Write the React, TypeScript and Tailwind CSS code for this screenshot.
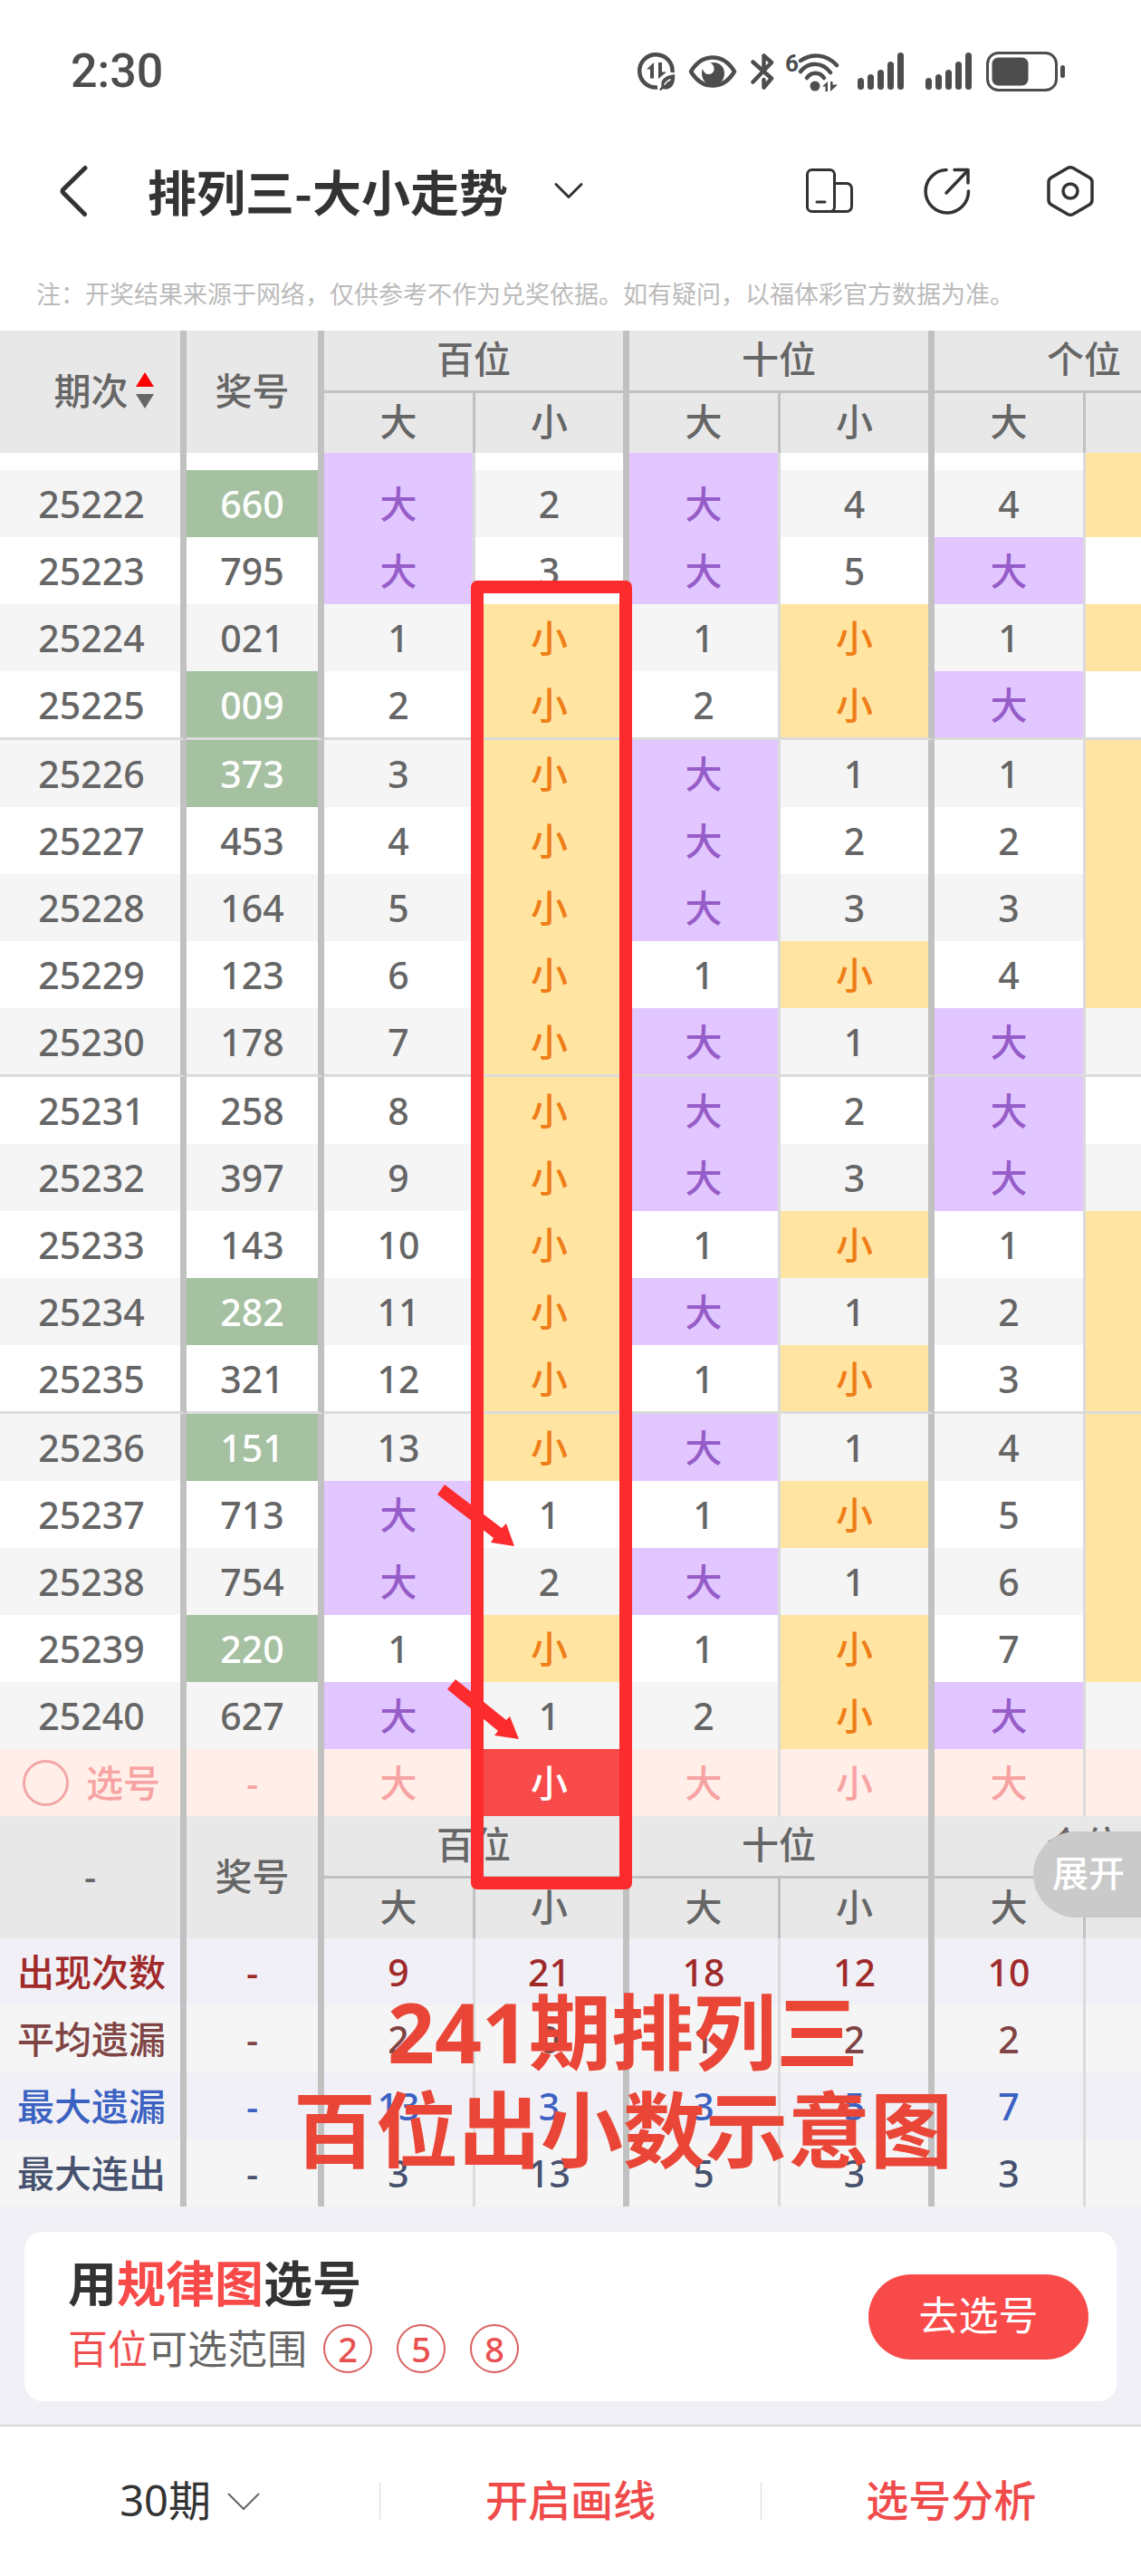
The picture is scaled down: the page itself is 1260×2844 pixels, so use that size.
import React from 'react';
import clsx from 'clsx';

type Row = {
  issue: string;
  num: string;
  group?: boolean; // 组三号码，绿色底
  cells: [string, string, string, string, string];
};

// 每 5 期画一条分隔线
const rows: Row[] = [
  { issue: '25222', num: '660', group: true, cells: ['大', '2', '大', '4', '4'] },
  { issue: '25223', num: '795', cells: ['大', '3', '大', '5', '大'] },
  { issue: '25224', num: '021', cells: ['1', '小', '1', '小', '1'] },
  { issue: '25225', num: '009', group: true, cells: ['2', '小', '2', '小', '大'] },
  { issue: '25226', num: '373', group: true, cells: ['3', '小', '大', '1', '1'] },
  { issue: '25227', num: '453', cells: ['4', '小', '大', '2', '2'] },
  { issue: '25228', num: '164', cells: ['5', '小', '大', '3', '3'] },
  { issue: '25229', num: '123', cells: ['6', '小', '1', '小', '4'] },
  { issue: '25230', num: '178', cells: ['7', '小', '大', '1', '大'] },
  { issue: '25231', num: '258', cells: ['8', '小', '大', '2', '大'] },
  { issue: '25232', num: '397', cells: ['9', '小', '大', '3', '大'] },
  { issue: '25233', num: '143', cells: ['10', '小', '1', '小', '1'] },
  { issue: '25234', num: '282', group: true, cells: ['11', '小', '大', '1', '2'] },
  { issue: '25235', num: '321', cells: ['12', '小', '1', '小', '3'] },
  { issue: '25236', num: '151', group: true, cells: ['13', '小', '大', '1', '4'] },
  { issue: '25237', num: '713', cells: ['大', '1', '1', '小', '5'] },
  { issue: '25238', num: '754', cells: ['大', '2', '大', '1', '6'] },
  { issue: '25239', num: '220', group: true, cells: ['1', '小', '1', '小', '7'] },
  { issue: '25240', num: '627', cells: ['大', '1', '2', '小', '大'] },
];

const stats = [
  { label: '出现次数', color: 'text-[#a02a2a]', values: ['9', '21', '18', '12', '10'] },
  { label: '平均遗漏', color: 'text-[#7f4444]', values: ['2', '0', '1', '2', '2'] },
  { label: '最大遗漏', color: 'text-[#3b62c2]', values: ['13', '3', '3', '5', '7'] },
  { label: '最大连出', color: 'text-[#47526f]', values: ['3', '13', '5', '3', '3'] },
];

const thick = 'border-r-[7px] border-r-[#c1c1c1]';
const thin = 'border-r-[3px] border-r-[#dbdbdb]';
const headThin = 'border-r-[3px] border-r-[#c1c1c1]';

const edge = (i: number) => (i % 2 === 0 ? thin : thick);

const tone = (v: string) =>
  v === '大' ? 'bg-[#e2c6ff] text-[#965dc9]' : v === '小' ? 'bg-[#ffe5a1] text-[#ef7d18]' : '';

const Signal = () => (
  <svg className="h-[42px] w-[52px]" viewBox="0 0 52 42" fill="#4d4d4d">
    <rect x="0" y="28" width="7" height="13" rx="3.5" />
    <rect x="11" y="24" width="7" height="17" rx="3.5" />
    <rect x="22" y="19" width="7" height="22" rx="3.5" />
    <rect x="33" y="10" width="7" height="31" rx="3.5" />
    <rect x="44" y="0" width="7" height="41" rx="3.5" />
  </svg>
);

const StatusBar = () => (
  <div className="flex h-[158px] items-center justify-between pr-[83px] pl-[78px] text-[#4d4d4d]">
    <span className="font-['Roboto'] text-[52px] leading-[60px] font-medium">2:30</span>
    <div className="flex items-center">
      <svg className="mr-[14px] h-[42px] w-[42px]" viewBox="0 0 42 42" fill="none" stroke="#4d4d4d">
        <path d="M22 38.5A18.200 18.200 0 1 1 38.500 22" strokeWidth="4.500" />
        <path d="M10 18.500 18 11v17.500h-4V18.500Z" fill="#4d4d4d" stroke="none" />
        <path d="M23 11h4v10.500h5L23 29Z" fill="#4d4d4d" stroke="none" />
        <path d="M41 24c1 10-3 16-9 16.500-2 0-3 0-4-.5l-2 2-2-1 2.500-3.500C25 29 31 25.500 41 24Z" fill="#4d4d4d" stroke="none" />
        <path d="M29.500 35.500c2-3 4-4.500 7-6" strokeWidth="1.500" stroke="#fff" />
      </svg>
      <svg className="mr-[15px] h-[38px] w-[54px]" viewBox="0 0 54 38" fill="none">
        <path d="M3 19C9 9 17 3.500 27 3.500S45 9 51 19C45 29 37 34.500 27 34.500S9 29 3 19Z" stroke="#4d4d4d" strokeWidth="4.500" strokeLinejoin="round" />
        <path d="M24 9.500c9-2.500 16 3 16 11.500 0 7-5 13-12.500 13S15 28 15 21c0-2 .3-3.500 1-5 1 4 3.500 6 6.500 6 4 0 6.500-3 6-7-.3-2.700-2-4.700-4.500-5.500Z" fill="#4d4d4d" />
      </svg>
      <svg className="mr-[12px] h-[42px] w-[26px]" viewBox="0 0 26 42" fill="none" stroke="#4d4d4d" strokeWidth="4.500" strokeLinecap="round" strokeLinejoin="round">
        <path d="M2.500 10.500 23 28.500 14.500 38.500V30M2.500 32.500 23 11 14.500 3.500V16" />
      </svg>
      <div className="mr-[20px] flex h-[46px] items-start">
        <span className="font-['Roboto'] text-[26px] leading-[28px] font-bold">6</span>
        <svg className="mt-[3px] -ml-px h-[43px] w-[46px]" viewBox="0 0 46 43" fill="none" stroke="#4d4d4d" strokeWidth="4.500" strokeLinecap="round">
          <path d="M3 8C15 0 31 0 43 13" />
          <path d="M3 20C12 9 27 9 36 21" />
          <path d="M10 27C15 20 24 20 29 27" />
          <circle cx="19" cy="36" r="5.500" fill="#4d4d4d" stroke="none" />
          <path d="M27 36.500 33 31v11h-2.500v-5.500ZM36 31h2.500v3.500H44L36 42Z" fill="#4d4d4d" stroke="none" />
        </svg>
      </div>
      <div className="mr-[15px] flex gap-[23px]">
        <Signal />
        <Signal />
      </div>
      <svg className="h-[44px] w-[88px]" viewBox="0 0 88 44" fill="none">
        <rect x="1.500" y="1.500" width="76" height="41" rx="12" stroke="#4d4d4d" strokeWidth="3" />
        <rect x="6.500" y="6.500" width="40" height="31" rx="7" fill="#4d4d4d" />
        <rect x="82" y="15" width="5" height="14" rx="2.500" fill="#4d4d4d" />
      </svg>
    </div>
  </div>
);

const TitleBar = () => (
  <header className="flex h-[106px] items-center pr-[51px] pl-[65px] text-[#333333]">
    <button type="button" aria-label="返回">
      <svg className="h-[58px] w-[34px]" viewBox="0 0 34 58" fill="none" stroke="currentColor" strokeWidth="5" strokeLinecap="round" strokeLinejoin="round">
        <path d="M29 3.500 5 27Q3 29 5 31L28.500 54.500" />
      </svg>
    </button>
    <h1 className="ml-[64px] font-['Noto_Sans_CJK_SC',sans-serif] text-[54px] leading-[72px] font-bold">排列三-大小走势</h1>
    <button type="button" aria-label="切换走势" className="ml-[50px]">
      <svg className="h-[20px] w-[34px]" viewBox="0 0 34 20" fill="none" stroke="currentColor" strokeWidth="3" strokeLinecap="round" strokeLinejoin="round">
        <path d="M3 2.500 17 16.500 31 2.500" />
      </svg>
    </button>
    <div className="ml-auto flex items-center gap-[74px]">
      <button type="button" aria-label="横竖屏">
        <svg className="h-[56px] w-[54px]" viewBox="0 0 54 56" fill="none" stroke="currentColor" strokeWidth="3">
          <rect x="2.500" y="4.500" width="30" height="46" rx="5" />
          <path d="M32.500 19.500H46a5.500 5.500 0 0 1 5.500 5.500v20a5.500 5.500 0 0 1-5.500 5.500H28" />
          <path d="M13 40h9" strokeLinecap="round" />
        </svg>
      </button>
      <button type="button" aria-label="分享">
        <svg className="h-[56px] w-[64px]" viewBox="0 0 64 56" fill="none" stroke="currentColor" strokeWidth="3.500" strokeLinecap="round" strokeLinejoin="round">
          <path d="M28 4.500A23.700 23.700 0 1 0 52.500 28" />
          <path d="M37 4.500h15V19M52 5 28 30" />
        </svg>
      </button>
      <button type="button" aria-label="设置">
        <svg className="h-[58px] w-[54px]" viewBox="0 0 54 58" fill="none" stroke="currentColor" strokeWidth="3.500" strokeLinejoin="round">
          <path d="M24 3.500q3-1.600 6 0l18 10.500q3 1.800 3 5v20q0 3.200-3 5L30 54.500q-3 1.600-6 0L6 44q-3-1.800-3-5V19q0-3.200 3-5Z" />
          <circle cx="27" cy="29" r="8" />
        </svg>
      </button>
    </div>
  </header>
);

const GroupHead: React.FC<{ first: React.ReactNode }> = ({ first }) => (
  <>
    <tr className="h-[69px]">
      <th rowSpan={2} className={thick}>{first}</th>
      <th rowSpan={2} className={thick}>奖号</th>
      {['百位', '十位', '个位'].map(name => (
        <th key={name} colSpan={2} className={clsx('border-b-[3px] border-b-[#c1c1c1]', thick)}>{name}</th>
      ))}
    </tr>
    <tr className="h-[66px]">
      {['大', '小', '大', '小', '大'].map((name, i) => (
        <th key={i} className={i % 2 === 0 ? headThin : thick}>{name}</th>
      ))}
      <td className={thick} />
    </tr>
  </>
);

const TrendTable = () => (
  <table className="w-[1369px] table-fixed border-separate border-spacing-0 text-center text-[41px] leading-[60px] font-medium text-[#666666] [&_td]:p-0 [&_td:first-child]:pl-[3px] [&_th]:p-0 [&_th]:pb-[4px] [&_th]:font-medium">
    <colgroup>
      <col className="w-[206px]" />
      <col className="w-[152px]" />
      <col className="w-[167px]" />
      <col className="w-[170px]" />
      <col className="w-[167px]" />
      <col className="w-[170px]" />
      <col className="w-[167px]" />
      <col className="w-[170px]" />
    </colgroup>
    <thead className="bg-[#e8e8e8]">
      <GroupHead
        first={
          <button type="button" className="inline-flex items-center gap-[8px] pl-[30px]">
            期次
            <svg className="h-[40px] w-[20px]" viewBox="0 0 20 40">
              <path d="M10 0 20 16H0Z" fill="#ff0000" />
              <path d="M0 24h20L10 40Z" fill="#666666" />
            </svg>
          </button>
        }
      />
    </thead>
    <tbody>
      {/* 滚动到一半的上一期 */}
      <tr className="h-[19px]">
        <td className={thick} />
        <td className={thick} />
        <td className={clsx('bg-[#e2c6ff]', thin)} />
        <td className={thick} />
        <td className={clsx('bg-[#e2c6ff]', thin)} />
        <td className={thick} />
        <td className={thin} />
        <td className={clsx('bg-[#ffe5a1]', thick)} />
      </tr>
      {rows.map((row, r) => {
        const line = Number(row.issue) % 5 === 0 && r < rows.length - 1;
        const bottom = line && 'border-b-[3px] border-b-[#dbdbdb]';
        return (
          <tr key={row.issue} className={clsx(line ? 'h-[76px]' : 'h-[74px]', r % 2 === 0 ? 'bg-[#f5f5f5]' : 'bg-white')}>
            <td className={clsx(thick, bottom)}>{row.issue}</td>
            <td className={clsx(thick, bottom, row.group && 'bg-[#a6c1a2] text-white')}>{row.num}</td>
            {row.cells.map((v, i) => (
              <td key={i} className={clsx(edge(i), bottom, tone(v))}>{v}</td>
            ))}
            <td className={clsx(thick, bottom, row.cells[4] !== '大' && 'bg-[#ffe5a1]')} />
          </tr>
        );
      })}
      <tr className="h-[74px] bg-[#ffefe8] text-[#f7a3a3]">
        <td className={thick}>
          <label className="flex items-center gap-[19px] pl-[22px]">
            <input type="checkbox" className="h-[51px] w-[51px] appearance-none rounded-full border-[3px] border-[#f2a7a7]" />
            选号
          </label>
        </td>
        <td className={thick}>-</td>
        {['大', '小', '大', '小', '大'].map((v, i) => (
          <td key={i} className={clsx(edge(i), i === 1 && 'bg-[#f94a4a] text-white')}>
            <button type="button" className="w-full">{v}</button>
          </td>
        ))}
        <td className={thick} />
      </tr>
    </tbody>
    <tbody className="bg-[#e8e8e8]">
      <GroupHead first="-" />
    </tbody>
    <tbody>
      {stats.map((s, r) => (
        <tr key={s.label} className={clsx('h-[74px]', s.color, r % 2 === 0 ? 'bg-[#f1f0f6]' : 'bg-[#f5f5f5]')}>
          <td className={thick}>{s.label}</td>
          <td className={thick}>-</td>
          {s.values.map((v, i) => (
            <td key={i} className={edge(i)}>{v}</td>
          ))}
          <td className={thick} />
        </tr>
      ))}
    </tbody>
  </table>
);

// 画线标注：红框、箭头和说明文字
const Marks = () => (
  <>
    <div className="pointer-events-none absolute top-[276px] left-[520px] h-[1445px] w-[178px] rounded-[7px] border-[14px] border-[#fc2b2d]" />
    <svg className="pointer-events-none absolute top-[1270px] left-[480px] h-[290px] w-[100px]" viewBox="0 0 100 290" fill="#fc2b2d">
      <path d="M11 4 74 52 79 47 88 72 62 68 65 63 3 15Z" />
      <path d="M23 219 79 264 83 260 93 285 66 281 70 276 14 230Z" />
    </svg>
    <p className="pointer-events-none absolute top-[1824px] left-[320px] w-[736px] text-center text-[91px] leading-[108px] font-bold text-[#e94637]">
      241期排列三
      <br />
      百位出小数示意图
    </p>
    <button type="button" className="absolute top-[1657px] right-0 h-[95px] w-[119px] rounded-l-full bg-[#cacaca] pb-[4px] pl-[3px] text-[40px] leading-[60px] font-medium text-white">
      展开
    </button>
  </>
);

const PickPanel = () => (
  <section className="bg-[#f1f0f6] px-[27px] pt-[28px] pb-[26px]">
    <div className="flex items-center justify-between rounded-[20px] bg-white py-[22px] pr-[31px] pl-[48px]">
      <div className="pb-[6px]">
        <h2 className="text-[54px] leading-[70px] font-bold text-[#333333]">
          用<span className="text-[#f94a4a]">规律图</span>选号
        </h2>
        <div className="mt-[6px] flex h-[61px] items-center">
          <p className="text-[44px] leading-[60px] text-[#666666]">
            <span className="text-[#ef4e4e]">百位</span>可选范围
          </p>
          <ul className="ml-[18px] flex gap-[27px]">
            {['2', '5', '8'].map(n => (
              <li key={n} className="flex h-[54px] w-[54px] items-center justify-center rounded-full border-2 border-[#d9605f] text-[38px] leading-[50px] font-medium text-[#e85050]">
                {n}
              </li>
            ))}
          </ul>
        </div>
      </div>
      <button type="button" className="h-[94px] w-[243px] rounded-full bg-[#f94a4a] pb-[4px] text-[44px] leading-[60px] text-white">
        去选号
      </button>
    </div>
  </section>
);

const BottomBar = () => (
  <footer className="flex h-[167px] items-center border-t-2 border-[#d9d9d9] bg-white text-[47px] leading-[60px]">
    <label className="flex flex-1 items-center justify-center gap-[18px] text-[#333333]">
      <select aria-label="期数" className="appearance-none bg-transparent pb-[4px]">
        <option>30期</option>
      </select>
      <svg className="h-[20px] w-[36px]" viewBox="0 0 36 20" fill="none" stroke="#666666" strokeWidth="2">
        <path d="M1 1 18 18 35 1" />
      </svg>
    </label>
    <button type="button" className="flex h-[41px] flex-1 items-center justify-center border-l border-[#d9d9d9] pb-[4px] font-medium text-[#ef4b4b]">开启画线</button>
    <button type="button" className="flex h-[41px] flex-1 items-center justify-center border-l border-[#d9d9d9] pb-[4px] font-medium text-[#ef4b4b]">选号分析</button>
  </footer>
);

export default function App() {
  return (
    <div className="overflow-hidden bg-white font-['Noto_Sans','Noto_Sans_CJK_SC',sans-serif]">
      <StatusBar />
      <TitleBar />
      <p className="pt-[40px] pr-4 pb-[20px] pl-[40px] text-[27px] leading-[41px] text-[#bbbbbb]">
        注：开奖结果来源于网络，仅供参考不作为兑奖依据。如有疑问，以福体彩官方数据为准。
      </p>
      <main className="relative overflow-hidden">
        <TrendTable />
        <Marks />
      </main>
      <PickPanel />
      <BottomBar />
    </div>
  );
}
